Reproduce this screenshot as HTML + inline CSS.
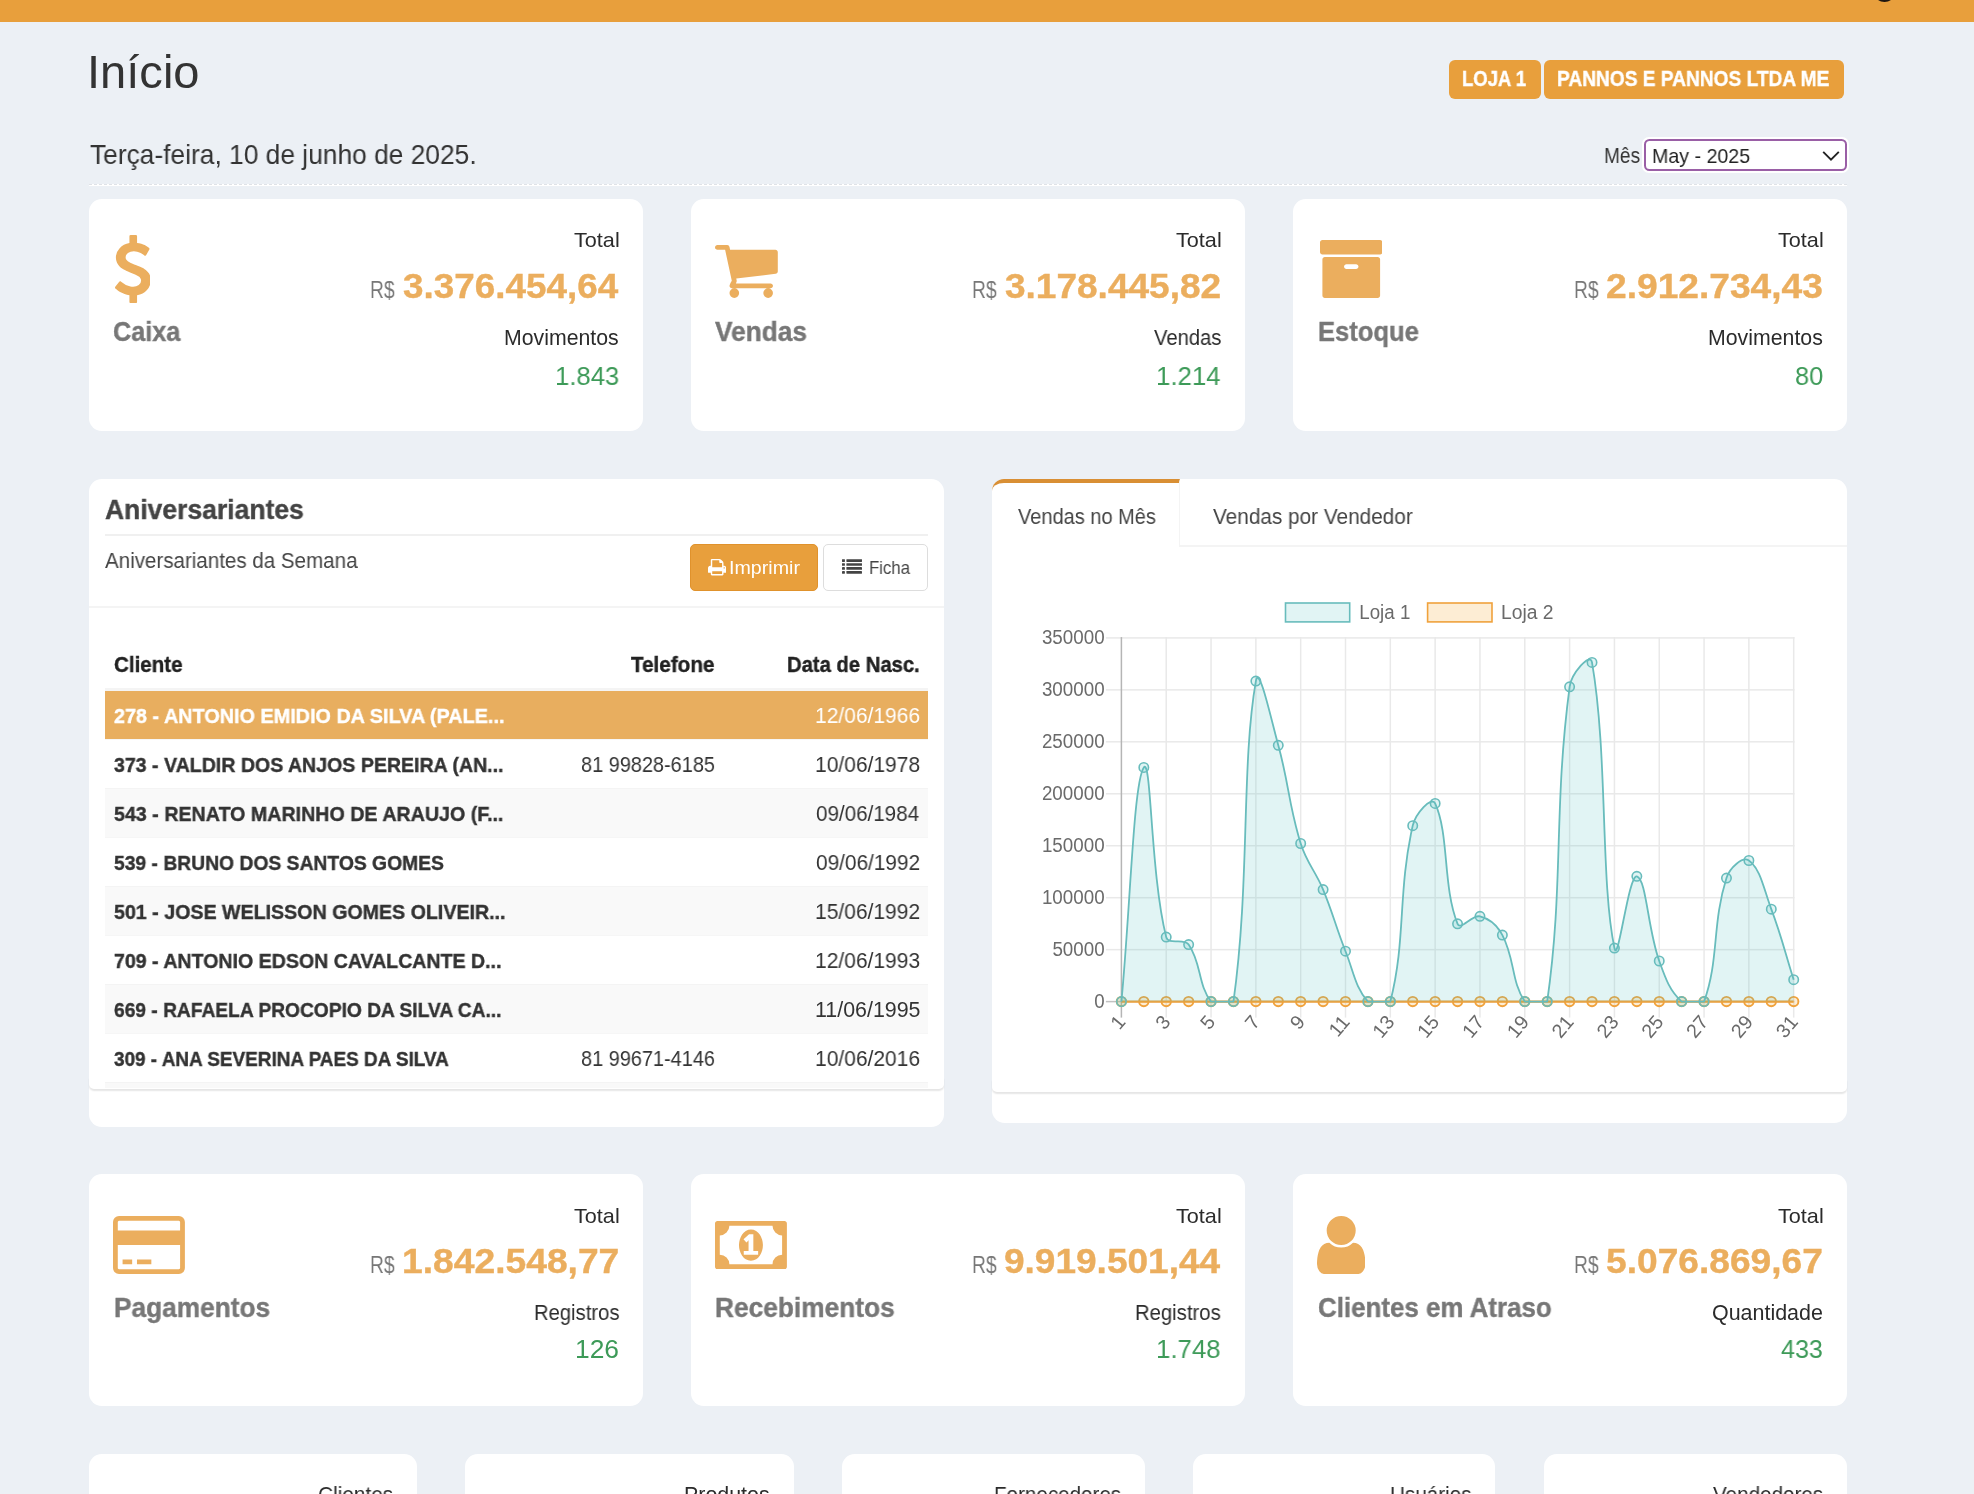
<!DOCTYPE html>
<html lang="pt-br"><head><meta charset="utf-8"><title>Início</title>
<style>
html,body{margin:0;padding:0}
body{width:1974px;height:1494px;overflow:hidden;position:relative;background:#ecf0f5;font-family:"Liberation Sans",sans-serif}
.b{position:absolute;box-sizing:border-box}
.card{position:absolute;box-sizing:border-box;background:#fff;border-radius:12.8px}
.t{position:absolute;white-space:nowrap;line-height:1;transform-origin:0 0;display:block;will-change:transform}
.ic{position:absolute;display:block}
</style></head><body>
<div class="b" style="left:0.0px;top:0.0px;width:1974.0px;height:21.6px;background:#e89f3c"></div>
<div class="b" style="left:1872.5px;top:-21.0px;width:23.0px;height:23.0px;background:#1e1610;border-radius:50%"></div>
<div class="b" style="left:1449.1px;top:59.8px;width:91.7px;height:39.0px;background:#e89f3c;border-radius:6px"></div>
<div class="b" style="left:1544.1px;top:59.8px;width:299.9px;height:39.0px;background:#e89f3c;border-radius:6px"></div>
<div class="b" style="left:1642.2px;top:137.4px;width:206.6px;height:35.2px;background:#fff;border-radius:7px"></div>
<div class="b" style="left:1644.0px;top:139.2px;width:203.0px;height:31.6px;background:#fff;border:2.2px solid #9a5fa6;border-radius:5.5px"></div>
<svg class="ic" style="left:1821px;top:149px" width="20" height="14" viewBox="0 0 20 14"><path d="M2.2 2.8 L10 10.6 L17.8 2.8" fill="none" stroke="#222" stroke-width="1.9" stroke-linecap="butt" stroke-linejoin="miter"/></svg>
<div class="b" style="left:89.0px;top:183.6px;width:1758.0px;height:2.5px;background:#fff;border-top:1.4px dashed #dfe2e7"></div>
<div class="card" style="left:89.0px;top:198.7px;width:554px;height:232.3px"></div>
<div class="card" style="left:691.0px;top:198.7px;width:554px;height:232.3px"></div>
<div class="card" style="left:1293.0px;top:198.7px;width:554px;height:232.3px"></div>
<div class="card" style="left:89.0px;top:1174.4px;width:554px;height:231.5px"></div>
<div class="card" style="left:691.0px;top:1174.4px;width:554px;height:231.5px"></div>
<div class="card" style="left:1293.0px;top:1174.4px;width:554px;height:231.5px"></div>
<div class="card" style="left:89.0px;top:1453.9px;width:328.0px;height:120px"></div>
<div class="card" style="left:465.0px;top:1453.9px;width:328.5px;height:120px"></div>
<div class="card" style="left:842.0px;top:1453.9px;width:302.6px;height:120px"></div>
<div class="card" style="left:1193.0px;top:1453.9px;width:302.3px;height:120px"></div>
<div class="card" style="left:1543.7px;top:1453.9px;width:303.1px;height:120px"></div>
<svg class="ic" style="left:114.7px;top:234.7px" width="35.8" height="68.1" viewBox="44.97 0 933.03 1792" preserveAspectRatio="none"><path fill="#ebae5e" d="M978 1185q0 153-99.500 263.500t-258.500 136.500v175q0 14-9 23t-23 9h-135q-13 0-22.500-9.500t-9.500-22.500v-175q-66-9-127.500-31t-101.500-44.500-74-48-46.500-37.500-17.500-18q-17-21-2-41l103-135q7-10 23-12 15-2 24 9l2 2q113 99 243 125 37 8 74 8 81 0 142.500-43t61.500-122q0-28-15-53t-33.500-42-58.500-37.500-66-32-80-32.500q-39-16-61.500-25t-61.500-26.500-62.500-31-56.500-35.500-53.500-42.500-43.500-49-35.500-58-21-66.500-8.500-78q0-138 98-242t255-134v-180q0-13 9.500-22.500t22.500-9.500h135q14 0 23 9t9 23v176q57 6 110.500 23t87 33.500 63.500 37.500 39 29 15 14q17 18 5 38l-81 146q-8 15-23 16-14 3-27-7-3-3-14.500-12t-39-26.500-58.500-32-74.500-26-85.500-11.500q-95 0-155 43t-60 111q0 26 8.500 48t29.500 41.500 39.500 33 56 31 60.500 27 70 27.500q53 20 81 31.500t76 35 75.500 42.500 62 50 53 63.500 31.500 76.500 13 94z"/></svg>
<svg class="ic" style="left:715.2px;top:245.1px" width="62.8" height="52.9" viewBox="64 256 1664 1408" preserveAspectRatio="none"><path fill="#ebae5e" d="M704 1536q0 52-38 90t-90 38-90-38-38-90 38-90 90-38 90 38 38 90zm896 0q0 52-38 90t-90 38-90-38-38-90 38-90 90-38 90 38 38 90zm128-1088v512q0 24-16.500 42.500t-40.500 21.500l-1044 122q13 60 13 70 0 16-24 64h920q26 0 45 19t19 45-19 45-45 19h-1024q-26 0-45-19t-19-45q0-11 8-31.500t16-36 21.500-40 15.500-29.500l-177-823h-204q-26 0-45-19t-19-45 19-45 45-19h256q16 0 28.500 6.500t19.500 15.500 13 24.500 8 26 5.500 29.500 4.500 26h1201q26 0 45 19t19 45z"/></svg>
<svg class="ic" style="left:1319.6px;top:240.0px" width="62.5" height="58.0" viewBox="64 128 1664 1536" preserveAspectRatio="none"><path fill="#ebae5e" d="M1088 832q0-26-19-45t-45-19h-256q-26 0-45 19t-19 45 19 45 45 19h256q26 0 45-19t19-45zm576-192v960q0 26-19 45t-45 19h-1408q-26 0-45-19t-19-45v-960q0-26 19-45t45-19h1408q26 0 45 19t19 45zm64-448v256q0 26-19 45t-45 19h-1536q-26 0-45-19t-19-45v-256q0-26 19-45t45-19h1536q26 0 45 19t19 45z"/></svg>
<svg class="ic" style="left:113.0px;top:1216.0px" width="71.9" height="58.0" viewBox="0 128 1920 1536" preserveAspectRatio="none"><path fill="#ebae5e" d="M1760 128q66 0 113 47t47 113v1216q0 66-47 113t-113 47h-1600q-66 0-113-47t-47-113v-1216q0-66 47-113t113-47h1600zm-1600 128q-13 0-22.500 9.500t-9.500 22.500v224h1664v-224q0-13-9.500-22.500t-22.500-9.500h-1600zm1600 1280q13 0 22.500-9.500t9.500-22.500v-608h-1664v608q0 13 9.500 22.500t22.500 9.500h1600zm-1504-128v-128h256v128h-256zm384 0v-128h384v128h-384z"/></svg>
<svg class="ic" style="left:715.2px;top:1221.0px" width="71.9" height="48.1" viewBox="0 256 1920 1280" preserveAspectRatio="none"><path fill="#ebae5e" d="M768 1152h384v-96h-128v-448h-114l-148 137 77 80q42-37 55-57h2v288h-128v96zm512-256q0 70-21 142t-59.500 134-101.500 101-138 39-138-39-101.500-101-59.500-134-21-142 21-142 59.500-134 101.500-101 138-39 138 39 101.500 101 59.500 134 21 142zm512 256v-512q-106 0-181-75t-75-181h-1152q0 106-75 181t-181 75v512q106 0 181 75t75 181h1152q0-106 75-181t181-75zm128-832v1152q0 26-19 45t-45 19h-1792q-26 0-45-19t-19-45v-1152q0-26 19-45t45-19h1792q26 0 45 19t19 45z"/></svg>
<svg class="ic" style="left:1317.0px;top:1215.9px" width="48.4" height="58.1" viewBox="256 128 1280 1536" preserveAspectRatio="none"><path fill="#ebae5e" d="M1536 1399q0 109-62.500 187t-150.500 78h-854q-88 0-150.500-78t-62.500-187q0-85 8.500-160.500t31.500-152 58.500-131 94-89 134.500-34.500q131 128 313 128t313-128q76 0 134.500 34.500t94 89 58.500 131 31.500 152 8.500 160.500zm-256-887q0 159-112.500 271.500t-271.500 112.500-271.500-112.500-112.500-271.500 112.500-271.500 271.500-112.500 271.500 112.500 112.500 271.500z"/></svg>
<div class="card" style="left:89px;top:479px;width:855px;height:648px"></div>
<div class="b" style="left:89.0px;top:1078.0px;width:855.0px;height:10.8px;background:#fff;border-radius:0 0 5px 5px;box-shadow:0 1.6px 1.6px rgba(0,0,0,0.1)"></div>
<div class="b" style="left:104.8px;top:534.4px;width:823.0px;height:1.6px;background:#f0f0f0"></div>
<div class="b" style="left:89.0px;top:606.4px;width:855.0px;height:1.6px;background:#f4f4f4"></div>
<div class="b" style="left:690.1px;top:544.2px;width:127.9px;height:46.8px;background:#e89f3c;border:1.6px solid #e0922c;border-radius:5px"></div>
<div class="b" style="left:823.4px;top:544.2px;width:104.4px;height:46.8px;background:#fff;border:1.6px solid #ddd;border-radius:5px"></div>
<svg class="ic" style="left:707.9px;top:559.2px" width="18.3" height="16.4" viewBox="0 128 1664 1536" preserveAspectRatio="none"><path fill="#fff" d="M384 1536h896v-256h-896v256zm0-640h896v-384h-160q-40 0-68-28t-28-68v-160h-640v640zm1152 64q0-26-19-45t-45-19-45 19-19 45 19 45 45 19 45-19 19-45zm128 0v416q0 13-9.500 22.500t-22.500 9.500h-224v160q0 40-28 68t-68 28h-960q-40 0-68-28t-28-68v-160h-224q-13 0-22.500-9.500t-9.500-22.500v-416q0-79 56.500-135.500t135.500-56.500h64v-544q0-40 28-68t68-28h672q40 0 88 20t76 48l152 152q28 28 48 76t20 88v256h64q79 0 135.500 56.500t56.500 135.500z"/></svg>
<svg class="ic" style="left:842px;top:559.2px" width="20" height="15.4" viewBox="0 0 20 15.4"><rect x="0" y="0.20" width="2.9" height="2.7" rx="0.4" fill="#444"/><rect x="4.4" y="0.20" width="15.6" height="2.7" rx="0.4" fill="#444"/><rect x="0" y="4.15" width="2.9" height="2.7" rx="0.4" fill="#444"/><rect x="4.4" y="4.15" width="15.6" height="2.7" rx="0.4" fill="#444"/><rect x="0" y="8.10" width="2.9" height="2.7" rx="0.4" fill="#444"/><rect x="4.4" y="8.10" width="15.6" height="2.7" rx="0.4" fill="#444"/><rect x="0" y="12.05" width="2.9" height="2.7" rx="0.4" fill="#444"/><rect x="4.4" y="12.05" width="15.6" height="2.7" rx="0.4" fill="#444"/></svg>
<div class="b" style="left:104.8px;top:687.8px;width:823.0px;height:3.2px;background:#f4f4f4"></div>
<div class="b" style="left:104.8px;top:691.0px;width:823.0px;height:48.0px;background:#e8ae5f"></div>
<div class="b" style="left:104.8px;top:739.0px;width:823.0px;height:49.0px;background:#fff;border-top:1.6px solid #f6f6f6"></div>
<div class="b" style="left:104.8px;top:788.0px;width:823.0px;height:49.0px;background:#f9f9f9;border-top:1.6px solid #f4f4f4"></div>
<div class="b" style="left:104.8px;top:837.0px;width:823.0px;height:49.0px;background:#fff;border-top:1.6px solid #f6f6f6"></div>
<div class="b" style="left:104.8px;top:886.0px;width:823.0px;height:49.0px;background:#f9f9f9;border-top:1.6px solid #f4f4f4"></div>
<div class="b" style="left:104.8px;top:935.0px;width:823.0px;height:49.0px;background:#fff;border-top:1.6px solid #f6f6f6"></div>
<div class="b" style="left:104.8px;top:984.0px;width:823.0px;height:49.0px;background:#f9f9f9;border-top:1.6px solid #f4f4f4"></div>
<div class="b" style="left:104.8px;top:1033.1px;width:823.0px;height:49.0px;background:#fff;border-top:1.6px solid #f6f6f6"></div>
<div class="b" style="left:104.8px;top:1082.1px;width:823.0px;height:5.7px;background:#f9f9f9;border-top:1.6px solid #f4f4f4"></div>
<div class="card" style="left:992px;top:479px;width:855px;height:644px"></div>
<div class="b" style="left:992.0px;top:1080.0px;width:855.0px;height:11.6px;background:#fff;border-radius:0 0 5px 5px;box-shadow:0 1.6px 1.6px rgba(0,0,0,0.1)"></div>
<div class="b" style="left:992.0px;top:479.0px;width:188.2px;height:67.8px;background:#fff;border-top:4.6px solid #d98f34;border-right:1.6px solid #f4f4f4;border-radius:12px 0 0 0"></div>
<div class="b" style="left:1180.0px;top:545.2px;width:667.0px;height:1.6px;background:#f4f4f4"></div>
<svg class="chart" width="870" height="520" viewBox="990 580 870 520" style="position:absolute;left:990px;top:580px;will-change:transform">
<rect x="1105.9" y="637.15" width="688.6" height="1.5" fill="#e9e9e9"/>
<rect x="1105.9" y="689.11" width="688.6" height="1.5" fill="#e9e9e9"/>
<rect x="1105.9" y="741.06" width="688.6" height="1.5" fill="#e9e9e9"/>
<rect x="1105.9" y="793.02" width="688.6" height="1.5" fill="#e9e9e9"/>
<rect x="1105.9" y="844.98" width="688.6" height="1.5" fill="#e9e9e9"/>
<rect x="1105.9" y="896.94" width="688.6" height="1.5" fill="#e9e9e9"/>
<rect x="1105.9" y="948.89" width="688.6" height="1.5" fill="#e9e9e9"/>
<rect x="1105.9" y="1000.85" width="688.6" height="1.5" fill="#c2c2c2"/>
<rect x="1120.65" y="637.1" width="1.5" height="380.5" fill="#b5b5b5"/>
<rect x="1165.47" y="637.1" width="1.5" height="380.5" fill="#e9e9e9"/>
<rect x="1210.29" y="637.1" width="1.5" height="380.5" fill="#e9e9e9"/>
<rect x="1255.11" y="637.1" width="1.5" height="380.5" fill="#e9e9e9"/>
<rect x="1299.93" y="637.1" width="1.5" height="380.5" fill="#e9e9e9"/>
<rect x="1344.75" y="637.1" width="1.5" height="380.5" fill="#e9e9e9"/>
<rect x="1389.57" y="637.1" width="1.5" height="380.5" fill="#e9e9e9"/>
<rect x="1434.39" y="637.1" width="1.5" height="380.5" fill="#e9e9e9"/>
<rect x="1479.21" y="637.1" width="1.5" height="380.5" fill="#e9e9e9"/>
<rect x="1524.03" y="637.1" width="1.5" height="380.5" fill="#e9e9e9"/>
<rect x="1568.85" y="637.1" width="1.5" height="380.5" fill="#e9e9e9"/>
<rect x="1613.67" y="637.1" width="1.5" height="380.5" fill="#e9e9e9"/>
<rect x="1658.49" y="637.1" width="1.5" height="380.5" fill="#e9e9e9"/>
<rect x="1703.31" y="637.1" width="1.5" height="380.5" fill="#e9e9e9"/>
<rect x="1748.13" y="637.1" width="1.5" height="380.5" fill="#e9e9e9"/>
<rect x="1792.95" y="637.1" width="1.5" height="380.5" fill="#e9e9e9"/>
<path d="M1121.40 1001.60 H1793.70" stroke="#f0a23c" stroke-width="2.1" fill="none"/>
<circle cx="1121.40" cy="1001.60" r="4.7" fill="rgba(243,156,18,0.18)" stroke="#f0a23c" stroke-width="1.9"/>
<circle cx="1143.81" cy="1001.60" r="4.7" fill="rgba(243,156,18,0.18)" stroke="#f0a23c" stroke-width="1.9"/>
<circle cx="1166.22" cy="1001.60" r="4.7" fill="rgba(243,156,18,0.18)" stroke="#f0a23c" stroke-width="1.9"/>
<circle cx="1188.63" cy="1001.60" r="4.7" fill="rgba(243,156,18,0.18)" stroke="#f0a23c" stroke-width="1.9"/>
<circle cx="1211.04" cy="1001.60" r="4.7" fill="rgba(243,156,18,0.18)" stroke="#f0a23c" stroke-width="1.9"/>
<circle cx="1233.45" cy="1001.60" r="4.7" fill="rgba(243,156,18,0.18)" stroke="#f0a23c" stroke-width="1.9"/>
<circle cx="1255.86" cy="1001.60" r="4.7" fill="rgba(243,156,18,0.18)" stroke="#f0a23c" stroke-width="1.9"/>
<circle cx="1278.27" cy="1001.60" r="4.7" fill="rgba(243,156,18,0.18)" stroke="#f0a23c" stroke-width="1.9"/>
<circle cx="1300.68" cy="1001.60" r="4.7" fill="rgba(243,156,18,0.18)" stroke="#f0a23c" stroke-width="1.9"/>
<circle cx="1323.09" cy="1001.60" r="4.7" fill="rgba(243,156,18,0.18)" stroke="#f0a23c" stroke-width="1.9"/>
<circle cx="1345.50" cy="1001.60" r="4.7" fill="rgba(243,156,18,0.18)" stroke="#f0a23c" stroke-width="1.9"/>
<circle cx="1367.91" cy="1001.60" r="4.7" fill="rgba(243,156,18,0.18)" stroke="#f0a23c" stroke-width="1.9"/>
<circle cx="1390.32" cy="1001.60" r="4.7" fill="rgba(243,156,18,0.18)" stroke="#f0a23c" stroke-width="1.9"/>
<circle cx="1412.73" cy="1001.60" r="4.7" fill="rgba(243,156,18,0.18)" stroke="#f0a23c" stroke-width="1.9"/>
<circle cx="1435.14" cy="1001.60" r="4.7" fill="rgba(243,156,18,0.18)" stroke="#f0a23c" stroke-width="1.9"/>
<circle cx="1457.55" cy="1001.60" r="4.7" fill="rgba(243,156,18,0.18)" stroke="#f0a23c" stroke-width="1.9"/>
<circle cx="1479.96" cy="1001.60" r="4.7" fill="rgba(243,156,18,0.18)" stroke="#f0a23c" stroke-width="1.9"/>
<circle cx="1502.37" cy="1001.60" r="4.7" fill="rgba(243,156,18,0.18)" stroke="#f0a23c" stroke-width="1.9"/>
<circle cx="1524.78" cy="1001.60" r="4.7" fill="rgba(243,156,18,0.18)" stroke="#f0a23c" stroke-width="1.9"/>
<circle cx="1547.19" cy="1001.60" r="4.7" fill="rgba(243,156,18,0.18)" stroke="#f0a23c" stroke-width="1.9"/>
<circle cx="1569.60" cy="1001.60" r="4.7" fill="rgba(243,156,18,0.18)" stroke="#f0a23c" stroke-width="1.9"/>
<circle cx="1592.01" cy="1001.60" r="4.7" fill="rgba(243,156,18,0.18)" stroke="#f0a23c" stroke-width="1.9"/>
<circle cx="1614.42" cy="1001.60" r="4.7" fill="rgba(243,156,18,0.18)" stroke="#f0a23c" stroke-width="1.9"/>
<circle cx="1636.83" cy="1001.60" r="4.7" fill="rgba(243,156,18,0.18)" stroke="#f0a23c" stroke-width="1.9"/>
<circle cx="1659.24" cy="1001.60" r="4.7" fill="rgba(243,156,18,0.18)" stroke="#f0a23c" stroke-width="1.9"/>
<circle cx="1681.65" cy="1001.60" r="4.7" fill="rgba(243,156,18,0.18)" stroke="#f0a23c" stroke-width="1.9"/>
<circle cx="1704.06" cy="1001.60" r="4.7" fill="rgba(243,156,18,0.18)" stroke="#f0a23c" stroke-width="1.9"/>
<circle cx="1726.47" cy="1001.60" r="4.7" fill="rgba(243,156,18,0.18)" stroke="#f0a23c" stroke-width="1.9"/>
<circle cx="1748.88" cy="1001.60" r="4.7" fill="rgba(243,156,18,0.18)" stroke="#f0a23c" stroke-width="1.9"/>
<circle cx="1771.29" cy="1001.60" r="4.7" fill="rgba(243,156,18,0.18)" stroke="#f0a23c" stroke-width="1.9"/>
<circle cx="1793.70" cy="1001.60" r="4.7" fill="rgba(243,156,18,0.18)" stroke="#f0a23c" stroke-width="1.9"/>
<path d="M1121.40 1001.60 C1130.36 907.95 1133.43 782.42 1143.81 767.48 C1151.36 756.62 1150.47 874.85 1166.22 937.10 C1168.40 945.69 1183.64 937.40 1188.63 944.58 C1201.57 963.20 1197.91 984.90 1211.04 1001.60 C1215.84 1001.60 1232.28 1001.60 1233.45 1001.60 C1250.21 881.76 1241.06 765.70 1255.86 681.10 C1258.99 663.18 1271.04 719.12 1278.27 745.31 C1288.97 784.09 1288.80 805.26 1300.68 843.51 C1306.72 862.96 1315.23 870.69 1323.09 889.58 C1333.15 913.77 1335.76 926.87 1345.50 951.21 C1353.69 971.68 1355.16 987.27 1367.91 1001.60 C1373.09 1001.60 1388.31 1001.60 1390.32 1001.60 C1406.24 939.12 1397.51 892.94 1412.73 825.65 C1415.44 813.69 1431.47 795.44 1435.14 803.48 C1449.40 834.72 1442.52 886.00 1457.55 923.85 C1460.45 931.15 1471.94 914.35 1479.96 916.36 C1489.87 918.85 1497.10 925.06 1502.37 935.08 C1515.03 959.16 1511.19 981.43 1524.78 1001.60 C1529.12 1001.60 1546.00 1001.60 1547.19 1001.60 C1563.93 884.05 1553.38 809.63 1569.60 686.85 C1571.31 673.94 1590.15 651.53 1592.01 662.38 C1608.08 756.01 1600.22 880.23 1614.42 948.04 C1618.14 965.82 1628.55 873.94 1636.83 876.34 C1646.48 879.13 1647.52 928.24 1659.24 961.00 C1665.45 978.34 1669.56 990.65 1681.65 1001.60 C1687.49 1001.60 1701.34 1001.60 1704.06 1001.60 C1719.27 959.67 1711.86 924.07 1726.47 878.06 C1729.78 867.63 1742.66 856.18 1748.88 860.50 C1760.59 868.62 1763.76 889.14 1771.29 909.16 C1781.69 936.83 1784.74 951.49 1793.70 979.71 L1793.70 1001.60 L1121.40 1001.60 Z" fill="rgba(75,192,192,0.17)" stroke="none"/>
<path d="M1121.40 1001.60 C1130.36 907.95 1133.43 782.42 1143.81 767.48 C1151.36 756.62 1150.47 874.85 1166.22 937.10 C1168.40 945.69 1183.64 937.40 1188.63 944.58 C1201.57 963.20 1197.91 984.90 1211.04 1001.60 C1215.84 1001.60 1232.28 1001.60 1233.45 1001.60 C1250.21 881.76 1241.06 765.70 1255.86 681.10 C1258.99 663.18 1271.04 719.12 1278.27 745.31 C1288.97 784.09 1288.80 805.26 1300.68 843.51 C1306.72 862.96 1315.23 870.69 1323.09 889.58 C1333.15 913.77 1335.76 926.87 1345.50 951.21 C1353.69 971.68 1355.16 987.27 1367.91 1001.60 C1373.09 1001.60 1388.31 1001.60 1390.32 1001.60 C1406.24 939.12 1397.51 892.94 1412.73 825.65 C1415.44 813.69 1431.47 795.44 1435.14 803.48 C1449.40 834.72 1442.52 886.00 1457.55 923.85 C1460.45 931.15 1471.94 914.35 1479.96 916.36 C1489.87 918.85 1497.10 925.06 1502.37 935.08 C1515.03 959.16 1511.19 981.43 1524.78 1001.60 C1529.12 1001.60 1546.00 1001.60 1547.19 1001.60 C1563.93 884.05 1553.38 809.63 1569.60 686.85 C1571.31 673.94 1590.15 651.53 1592.01 662.38 C1608.08 756.01 1600.22 880.23 1614.42 948.04 C1618.14 965.82 1628.55 873.94 1636.83 876.34 C1646.48 879.13 1647.52 928.24 1659.24 961.00 C1665.45 978.34 1669.56 990.65 1681.65 1001.60 C1687.49 1001.60 1701.34 1001.60 1704.06 1001.60 C1719.27 959.67 1711.86 924.07 1726.47 878.06 C1729.78 867.63 1742.66 856.18 1748.88 860.50 C1760.59 868.62 1763.76 889.14 1771.29 909.16 C1781.69 936.83 1784.74 951.49 1793.70 979.71" fill="none" stroke="#68bcbc" stroke-width="1.8" stroke-linejoin="round"/>
<circle cx="1121.40" cy="1001.60" r="4.7" fill="rgba(75,192,192,0.17)" stroke="#68bcbc" stroke-width="1.6"/>
<circle cx="1143.81" cy="767.48" r="4.7" fill="rgba(75,192,192,0.17)" stroke="#68bcbc" stroke-width="1.6"/>
<circle cx="1166.22" cy="937.10" r="4.7" fill="rgba(75,192,192,0.17)" stroke="#68bcbc" stroke-width="1.6"/>
<circle cx="1188.63" cy="944.58" r="4.7" fill="rgba(75,192,192,0.17)" stroke="#68bcbc" stroke-width="1.6"/>
<circle cx="1211.04" cy="1001.60" r="4.7" fill="rgba(75,192,192,0.17)" stroke="#68bcbc" stroke-width="1.6"/>
<circle cx="1233.45" cy="1001.60" r="4.7" fill="rgba(75,192,192,0.17)" stroke="#68bcbc" stroke-width="1.6"/>
<circle cx="1255.86" cy="681.10" r="4.7" fill="rgba(75,192,192,0.17)" stroke="#68bcbc" stroke-width="1.6"/>
<circle cx="1278.27" cy="745.31" r="4.7" fill="rgba(75,192,192,0.17)" stroke="#68bcbc" stroke-width="1.6"/>
<circle cx="1300.68" cy="843.51" r="4.7" fill="rgba(75,192,192,0.17)" stroke="#68bcbc" stroke-width="1.6"/>
<circle cx="1323.09" cy="889.58" r="4.7" fill="rgba(75,192,192,0.17)" stroke="#68bcbc" stroke-width="1.6"/>
<circle cx="1345.50" cy="951.21" r="4.7" fill="rgba(75,192,192,0.17)" stroke="#68bcbc" stroke-width="1.6"/>
<circle cx="1367.91" cy="1001.60" r="4.7" fill="rgba(75,192,192,0.17)" stroke="#68bcbc" stroke-width="1.6"/>
<circle cx="1390.32" cy="1001.60" r="4.7" fill="rgba(75,192,192,0.17)" stroke="#68bcbc" stroke-width="1.6"/>
<circle cx="1412.73" cy="825.65" r="4.7" fill="rgba(75,192,192,0.17)" stroke="#68bcbc" stroke-width="1.6"/>
<circle cx="1435.14" cy="803.48" r="4.7" fill="rgba(75,192,192,0.17)" stroke="#68bcbc" stroke-width="1.6"/>
<circle cx="1457.55" cy="923.85" r="4.7" fill="rgba(75,192,192,0.17)" stroke="#68bcbc" stroke-width="1.6"/>
<circle cx="1479.96" cy="916.36" r="4.7" fill="rgba(75,192,192,0.17)" stroke="#68bcbc" stroke-width="1.6"/>
<circle cx="1502.37" cy="935.08" r="4.7" fill="rgba(75,192,192,0.17)" stroke="#68bcbc" stroke-width="1.6"/>
<circle cx="1524.78" cy="1001.60" r="4.7" fill="rgba(75,192,192,0.17)" stroke="#68bcbc" stroke-width="1.6"/>
<circle cx="1547.19" cy="1001.60" r="4.7" fill="rgba(75,192,192,0.17)" stroke="#68bcbc" stroke-width="1.6"/>
<circle cx="1569.60" cy="686.85" r="4.7" fill="rgba(75,192,192,0.17)" stroke="#68bcbc" stroke-width="1.6"/>
<circle cx="1592.01" cy="662.38" r="4.7" fill="rgba(75,192,192,0.17)" stroke="#68bcbc" stroke-width="1.6"/>
<circle cx="1614.42" cy="948.04" r="4.7" fill="rgba(75,192,192,0.17)" stroke="#68bcbc" stroke-width="1.6"/>
<circle cx="1636.83" cy="876.34" r="4.7" fill="rgba(75,192,192,0.17)" stroke="#68bcbc" stroke-width="1.6"/>
<circle cx="1659.24" cy="961.00" r="4.7" fill="rgba(75,192,192,0.17)" stroke="#68bcbc" stroke-width="1.6"/>
<circle cx="1681.65" cy="1001.60" r="4.7" fill="rgba(75,192,192,0.17)" stroke="#68bcbc" stroke-width="1.6"/>
<circle cx="1704.06" cy="1001.60" r="4.7" fill="rgba(75,192,192,0.17)" stroke="#68bcbc" stroke-width="1.6"/>
<circle cx="1726.47" cy="878.06" r="4.7" fill="rgba(75,192,192,0.17)" stroke="#68bcbc" stroke-width="1.6"/>
<circle cx="1748.88" cy="860.50" r="4.7" fill="rgba(75,192,192,0.17)" stroke="#68bcbc" stroke-width="1.6"/>
<circle cx="1771.29" cy="909.16" r="4.7" fill="rgba(75,192,192,0.17)" stroke="#68bcbc" stroke-width="1.6"/>
<circle cx="1793.70" cy="979.71" r="4.7" fill="rgba(75,192,192,0.17)" stroke="#68bcbc" stroke-width="1.6"/>
<rect x="1285.5" y="603" width="64.2" height="18.9" fill="rgba(75,192,192,0.17)" stroke="#68bcbc" stroke-width="1.6"/>
<rect x="1427.6" y="603" width="64.4" height="18.9" fill="rgba(243,156,18,0.18)" stroke="#f0a23c" stroke-width="1.6"/>
<text x="1359.3" y="618.9" textLength="51" lengthAdjust="spacingAndGlyphs" style="font-family:&quot;Liberation Sans&quot;,sans-serif;font-size:19.6px;fill:#6a6a6a">Loja 1</text>
<text x="1501" y="618.9" textLength="52.6" lengthAdjust="spacingAndGlyphs" style="font-family:&quot;Liberation Sans&quot;,sans-serif;font-size:19.6px;fill:#6a6a6a">Loja 2</text>
<text x="1104.6" y="644.30" text-anchor="end" textLength="62.7" lengthAdjust="spacingAndGlyphs" style="font-family:&quot;Liberation Sans&quot;,sans-serif;font-size:19.6px;fill:#6a6a6a">350000</text>
<text x="1104.6" y="696.26" text-anchor="end" textLength="62.7" lengthAdjust="spacingAndGlyphs" style="font-family:&quot;Liberation Sans&quot;,sans-serif;font-size:19.6px;fill:#6a6a6a">300000</text>
<text x="1104.6" y="748.21" text-anchor="end" textLength="62.7" lengthAdjust="spacingAndGlyphs" style="font-family:&quot;Liberation Sans&quot;,sans-serif;font-size:19.6px;fill:#6a6a6a">250000</text>
<text x="1104.6" y="800.17" text-anchor="end" textLength="62.7" lengthAdjust="spacingAndGlyphs" style="font-family:&quot;Liberation Sans&quot;,sans-serif;font-size:19.6px;fill:#6a6a6a">200000</text>
<text x="1104.6" y="852.13" text-anchor="end" textLength="62.7" lengthAdjust="spacingAndGlyphs" style="font-family:&quot;Liberation Sans&quot;,sans-serif;font-size:19.6px;fill:#6a6a6a">150000</text>
<text x="1104.6" y="904.09" text-anchor="end" textLength="62.7" lengthAdjust="spacingAndGlyphs" style="font-family:&quot;Liberation Sans&quot;,sans-serif;font-size:19.6px;fill:#6a6a6a">100000</text>
<text x="1104.6" y="956.04" text-anchor="end" textLength="52.2" lengthAdjust="spacingAndGlyphs" style="font-family:&quot;Liberation Sans&quot;,sans-serif;font-size:19.6px;fill:#6a6a6a">50000</text>
<text x="1104.6" y="1008.00" text-anchor="end" textLength="10.4" lengthAdjust="spacingAndGlyphs" style="font-family:&quot;Liberation Sans&quot;,sans-serif;font-size:19.6px;fill:#6a6a6a">0</text>
<text transform="translate(1121.40 1018.10) rotate(-50)" x="0" y="6.8" text-anchor="end" style="font-family:&quot;Liberation Sans&quot;,sans-serif;font-size:19.6px;fill:#6a6a6a">1</text>
<text transform="translate(1166.22 1018.10) rotate(-50)" x="0" y="6.8" text-anchor="end" style="font-family:&quot;Liberation Sans&quot;,sans-serif;font-size:19.6px;fill:#6a6a6a">3</text>
<text transform="translate(1211.04 1018.10) rotate(-50)" x="0" y="6.8" text-anchor="end" style="font-family:&quot;Liberation Sans&quot;,sans-serif;font-size:19.6px;fill:#6a6a6a">5</text>
<text transform="translate(1255.86 1018.10) rotate(-50)" x="0" y="6.8" text-anchor="end" style="font-family:&quot;Liberation Sans&quot;,sans-serif;font-size:19.6px;fill:#6a6a6a">7</text>
<text transform="translate(1300.68 1018.10) rotate(-50)" x="0" y="6.8" text-anchor="end" style="font-family:&quot;Liberation Sans&quot;,sans-serif;font-size:19.6px;fill:#6a6a6a">9</text>
<text transform="translate(1345.50 1018.10) rotate(-50)" x="0" y="6.8" text-anchor="end" style="font-family:&quot;Liberation Sans&quot;,sans-serif;font-size:19.6px;fill:#6a6a6a">11</text>
<text transform="translate(1390.32 1018.10) rotate(-50)" x="0" y="6.8" text-anchor="end" style="font-family:&quot;Liberation Sans&quot;,sans-serif;font-size:19.6px;fill:#6a6a6a">13</text>
<text transform="translate(1435.14 1018.10) rotate(-50)" x="0" y="6.8" text-anchor="end" style="font-family:&quot;Liberation Sans&quot;,sans-serif;font-size:19.6px;fill:#6a6a6a">15</text>
<text transform="translate(1479.96 1018.10) rotate(-50)" x="0" y="6.8" text-anchor="end" style="font-family:&quot;Liberation Sans&quot;,sans-serif;font-size:19.6px;fill:#6a6a6a">17</text>
<text transform="translate(1524.78 1018.10) rotate(-50)" x="0" y="6.8" text-anchor="end" style="font-family:&quot;Liberation Sans&quot;,sans-serif;font-size:19.6px;fill:#6a6a6a">19</text>
<text transform="translate(1569.60 1018.10) rotate(-50)" x="0" y="6.8" text-anchor="end" style="font-family:&quot;Liberation Sans&quot;,sans-serif;font-size:19.6px;fill:#6a6a6a">21</text>
<text transform="translate(1614.42 1018.10) rotate(-50)" x="0" y="6.8" text-anchor="end" style="font-family:&quot;Liberation Sans&quot;,sans-serif;font-size:19.6px;fill:#6a6a6a">23</text>
<text transform="translate(1659.24 1018.10) rotate(-50)" x="0" y="6.8" text-anchor="end" style="font-family:&quot;Liberation Sans&quot;,sans-serif;font-size:19.6px;fill:#6a6a6a">25</text>
<text transform="translate(1704.06 1018.10) rotate(-50)" x="0" y="6.8" text-anchor="end" style="font-family:&quot;Liberation Sans&quot;,sans-serif;font-size:19.6px;fill:#6a6a6a">27</text>
<text transform="translate(1748.88 1018.10) rotate(-50)" x="0" y="6.8" text-anchor="end" style="font-family:&quot;Liberation Sans&quot;,sans-serif;font-size:19.6px;fill:#6a6a6a">29</text>
<text transform="translate(1793.70 1018.10) rotate(-50)" x="0" y="6.8" text-anchor="end" style="font-family:&quot;Liberation Sans&quot;,sans-serif;font-size:19.6px;fill:#6a6a6a">31</text>
</svg>
<span class="t" style="left:86.87px;top:50.40px;font-size:45.6px;color:#333;transform:scaleX(1.0326)">Início</span>
<span class="t" style="left:89.50px;top:141.40px;font-size:27.2px;color:#333;transform:scaleX(0.9689)">Terça-feira, 10 de junho de 2025.</span>
<span class="t" style="left:1462.14px;top:69.10px;font-size:21.4px;color:#fff;font-weight:700;-webkit-text-stroke:0.4px #fff;transform:scaleX(0.8650)">LOJA 1</span>
<span class="t" style="left:1557.41px;top:69.10px;font-size:21.4px;color:#fff;font-weight:700;-webkit-text-stroke:0.4px #fff;transform:scaleX(0.8943)">PANNOS E PANNOS LTDA ME</span>
<span class="t" style="left:1603.51px;top:145.80px;font-size:21.4px;color:#333;transform:scaleX(0.8937)">Mês</span>
<span class="t" style="left:1651.54px;top:145.80px;font-size:20.4px;color:#222;transform:scaleX(0.9616)">May - 2025</span>
<span class="t" style="left:573.50px;top:228.70px;font-size:21.0px;color:#2b2b2b;transform:scaleX(1.0299)">Total</span>
<span class="t" style="left:370.19px;top:277.70px;font-size:23.8px;color:#777;transform:scaleX(0.8086)">R$</span>
<span class="t" style="left:402.60px;top:268.70px;font-size:35.4px;color:#ebae5e;font-weight:700;-webkit-text-stroke:0.4px #ebae5e;transform:scaleX(1.0413)">3.376.454,64</span>
<span class="t" style="left:504.40px;top:326.80px;font-size:21.2px;color:#2b2b2b;transform:scaleX(1.0043)">Movimentos</span>
<span class="t" style="left:554.65px;top:362.70px;font-size:26.4px;color:#3d9a58;transform:scaleX(0.9737)">1.843</span>
<span class="t" style="left:113.27px;top:319.00px;font-size:27.0px;color:#777;font-weight:700;-webkit-text-stroke:0.4px #777;transform:scaleX(0.9343)">Caixa</span>
<span class="t" style="left:1175.50px;top:228.70px;font-size:21.0px;color:#2b2b2b;transform:scaleX(1.0299)">Total</span>
<span class="t" style="left:972.19px;top:277.70px;font-size:23.8px;color:#777;transform:scaleX(0.8086)">R$</span>
<span class="t" style="left:1004.70px;top:268.70px;font-size:35.4px;color:#ebae5e;font-weight:700;-webkit-text-stroke:0.4px #ebae5e;transform:scaleX(1.0458)">3.178.445,82</span>
<span class="t" style="left:1153.60px;top:326.80px;font-size:21.2px;color:#2b2b2b;transform:scaleX(0.9544)">Vendas</span>
<span class="t" style="left:1156.34px;top:362.70px;font-size:26.4px;color:#3d9a58;transform:scaleX(0.9785)">1.214</span>
<span class="t" style="left:715.30px;top:319.00px;font-size:27.0px;color:#777;font-weight:700;-webkit-text-stroke:0.4px #777;transform:scaleX(0.9729)">Vendas</span>
<span class="t" style="left:1777.50px;top:228.70px;font-size:21.0px;color:#2b2b2b;transform:scaleX(1.0299)">Total</span>
<span class="t" style="left:1574.19px;top:277.70px;font-size:23.8px;color:#777;transform:scaleX(0.8086)">R$</span>
<span class="t" style="left:1605.95px;top:268.70px;font-size:35.4px;color:#ebae5e;font-weight:700;-webkit-text-stroke:0.4px #ebae5e;transform:scaleX(1.0495)">2.912.734,43</span>
<span class="t" style="left:1708.29px;top:326.80px;font-size:21.2px;color:#2b2b2b;transform:scaleX(1.0051)">Movimentos</span>
<span class="t" style="left:1794.74px;top:362.70px;font-size:26.4px;color:#3d9a58;transform:scaleX(0.9611)">80</span>
<span class="t" style="left:1317.85px;top:319.00px;font-size:27.0px;color:#777;font-weight:700;-webkit-text-stroke:0.4px #777;transform:scaleX(0.9470)">Estoque</span>
<span class="t" style="left:573.50px;top:1204.70px;font-size:21.0px;color:#2b2b2b;transform:scaleX(1.0299)">Total</span>
<span class="t" style="left:370.19px;top:1252.70px;font-size:23.8px;color:#777;transform:scaleX(0.8086)">R$</span>
<span class="t" style="left:401.50px;top:1243.70px;font-size:35.4px;color:#ebae5e;font-weight:700;-webkit-text-stroke:0.4px #ebae5e;transform:scaleX(1.0517)">1.842.548,77</span>
<span class="t" style="left:533.54px;top:1301.80px;font-size:21.2px;color:#2b2b2b;transform:scaleX(0.9557)">Registros</span>
<span class="t" style="left:575.42px;top:1336.40px;font-size:26.4px;color:#3d9a58;transform:scaleX(0.9890)">126</span>
<span class="t" style="left:114.03px;top:1294.85px;font-size:27.0px;color:#777;font-weight:700;-webkit-text-stroke:0.4px #777;transform:scaleX(0.9727)">Pagamentos</span>
<span class="t" style="left:1175.50px;top:1204.70px;font-size:21.0px;color:#2b2b2b;transform:scaleX(1.0299)">Total</span>
<span class="t" style="left:972.19px;top:1252.70px;font-size:23.8px;color:#777;transform:scaleX(0.8086)">R$</span>
<span class="t" style="left:1003.65px;top:1243.70px;font-size:35.4px;color:#ebae5e;font-weight:700;-webkit-text-stroke:0.4px #ebae5e;transform:scaleX(1.0458)">9.919.501,44</span>
<span class="t" style="left:1135.34px;top:1301.80px;font-size:21.2px;color:#2b2b2b;transform:scaleX(0.9580)">Registros</span>
<span class="t" style="left:1156.34px;top:1336.40px;font-size:26.4px;color:#3d9a58;transform:scaleX(0.9785)">1.748</span>
<span class="t" style="left:715.13px;top:1294.85px;font-size:27.0px;color:#777;font-weight:700;-webkit-text-stroke:0.4px #777;transform:scaleX(0.9740)">Recebimentos</span>
<span class="t" style="left:1777.50px;top:1204.70px;font-size:21.0px;color:#2b2b2b;transform:scaleX(1.0299)">Total</span>
<span class="t" style="left:1574.19px;top:1252.70px;font-size:23.8px;color:#777;transform:scaleX(0.8086)">R$</span>
<span class="t" style="left:1605.95px;top:1243.70px;font-size:35.4px;color:#ebae5e;font-weight:700;-webkit-text-stroke:0.4px #ebae5e;transform:scaleX(1.0495)">5.076.869,67</span>
<span class="t" style="left:1712.39px;top:1301.80px;font-size:21.2px;color:#2b2b2b;transform:scaleX(1.0123)">Quantidade</span>
<span class="t" style="left:1781.00px;top:1336.40px;font-size:26.4px;color:#3d9a58;transform:scaleX(0.9526)">433</span>
<span class="t" style="left:1317.54px;top:1294.85px;font-size:27.0px;color:#777;font-weight:700;-webkit-text-stroke:0.4px #777;transform:scaleX(0.9597)">Clientes em Atraso</span>
<span class="t" style="left:318.13px;top:1485.20px;font-size:21.4px;color:#2b2b2b;transform:scaleX(0.9737)">Clientes</span>
<span class="t" style="left:683.90px;top:1485.20px;font-size:21.4px;color:#2b2b2b;transform:scaleX(0.9998)">Produtos</span>
<span class="t" style="left:993.54px;top:1485.20px;font-size:21.4px;color:#2b2b2b;transform:scaleX(0.9633)">Fornecedores</span>
<span class="t" style="left:1390.23px;top:1485.20px;font-size:21.4px;color:#2b2b2b;transform:scaleX(0.9661)">Usuários</span>
<span class="t" style="left:1712.90px;top:1485.20px;font-size:21.4px;color:#2b2b2b;transform:scaleX(0.9649)">Vendedores</span>
<span class="t" style="left:104.80px;top:495.60px;font-size:27.4px;color:#444;font-weight:700;-webkit-text-stroke:0.4px #444;transform:scaleX(0.9673)">Aniversariantes</span>
<span class="t" style="left:105.30px;top:550.80px;font-size:21.4px;color:#444;transform:scaleX(0.9609)">Aniversariantes da Semana</span>
<span class="t" style="left:729.34px;top:559.40px;font-size:18.6px;color:#fff;transform:scaleX(1.0571)">Imprimir</span>
<span class="t" style="left:868.60px;top:559.40px;font-size:18.6px;color:#444;transform:scaleX(0.8997)">Ficha</span>
<span class="t" style="left:113.70px;top:655.00px;font-size:21.4px;color:#222;font-weight:700;-webkit-text-stroke:0.4px #222;transform:scaleX(0.9605)">Cliente</span>
<span class="t" style="left:630.50px;top:655.00px;font-size:21.4px;color:#222;font-weight:700;-webkit-text-stroke:0.4px #222;transform:scaleX(0.9657)">Telefone</span>
<span class="t" style="left:787.45px;top:655.00px;font-size:21.4px;color:#222;font-weight:700;-webkit-text-stroke:0.4px #222;transform:scaleX(0.9462)">Data de Nasc.</span>
<span class="t" style="left:113.60px;top:705.10px;font-size:21.0px;color:#fff;font-weight:700;-webkit-text-stroke:0.4px #fff;transform:scaleX(0.9436)">278 - ANTONIO EMIDIO DA SILVA (PALE...</span>
<span class="t" style="left:815.42px;top:706.10px;font-size:21.4px;color:#fff;transform:scaleX(0.9814)">12/06/1966</span>
<span class="t" style="left:113.60px;top:754.10px;font-size:21.0px;color:#333;font-weight:700;-webkit-text-stroke:0.4px #333;transform:scaleX(0.9316)">373 - VALDIR DOS ANJOS PEREIRA (AN...</span>
<span class="t" style="left:580.90px;top:755.10px;font-size:21.4px;color:#333;transform:scaleX(0.9306)">81 99828-6185</span>
<span class="t" style="left:815.42px;top:755.10px;font-size:21.4px;color:#333;transform:scaleX(0.9814)">10/06/1978</span>
<span class="t" style="left:113.60px;top:803.11px;font-size:21.0px;color:#333;font-weight:700;-webkit-text-stroke:0.4px #333;transform:scaleX(0.9358)">543 - RENATO MARINHO DE ARAUJO (F...</span>
<span class="t" style="left:816.40px;top:804.11px;font-size:21.4px;color:#333;transform:scaleX(0.9630)">09/06/1984</span>
<span class="t" style="left:113.60px;top:852.12px;font-size:21.0px;color:#333;font-weight:700;-webkit-text-stroke:0.4px #333;transform:scaleX(0.9189)">539 - BRUNO DOS SANTOS GOMES</span>
<span class="t" style="left:816.40px;top:853.12px;font-size:21.4px;color:#333;transform:scaleX(0.9721)">09/06/1992</span>
<span class="t" style="left:113.60px;top:901.13px;font-size:21.0px;color:#333;font-weight:700;-webkit-text-stroke:0.4px #333;transform:scaleX(0.9345)">501 - JOSE WELISSON GOMES OLIVEIR...</span>
<span class="t" style="left:815.42px;top:902.13px;font-size:21.4px;color:#333;transform:scaleX(0.9814)">15/06/1992</span>
<span class="t" style="left:113.60px;top:950.14px;font-size:21.0px;color:#333;font-weight:700;-webkit-text-stroke:0.4px #333;transform:scaleX(0.9319)">709 - ANTONIO EDSON CAVALCANTE D...</span>
<span class="t" style="left:815.42px;top:951.14px;font-size:21.4px;color:#333;transform:scaleX(0.9814)">12/06/1993</span>
<span class="t" style="left:113.60px;top:999.15px;font-size:21.0px;color:#333;font-weight:700;-webkit-text-stroke:0.4px #333;transform:scaleX(0.9141)">669 - RAFAELA PROCOPIO DA SILVA CA...</span>
<span class="t" style="left:815.40px;top:1000.15px;font-size:21.4px;color:#333;transform:scaleX(0.9964)">11/06/1995</span>
<span class="t" style="left:113.60px;top:1048.16px;font-size:21.0px;color:#333;font-weight:700;-webkit-text-stroke:0.4px #333;transform:scaleX(0.9014)">309 - ANA SEVERINA PAES DA SILVA</span>
<span class="t" style="left:580.90px;top:1049.16px;font-size:21.4px;color:#333;transform:scaleX(0.9306)">81 99671-4146</span>
<span class="t" style="left:815.42px;top:1049.16px;font-size:21.4px;color:#333;transform:scaleX(0.9814)">10/06/2016</span>
<span class="t" style="left:1017.50px;top:507.00px;font-size:21.4px;color:#444;transform:scaleX(0.9355)">Vendas no Mês</span>
<span class="t" style="left:1213.00px;top:507.00px;font-size:21.4px;color:#444;transform:scaleX(0.9707)">Vendas por Vendedor</span>
</body></html>
